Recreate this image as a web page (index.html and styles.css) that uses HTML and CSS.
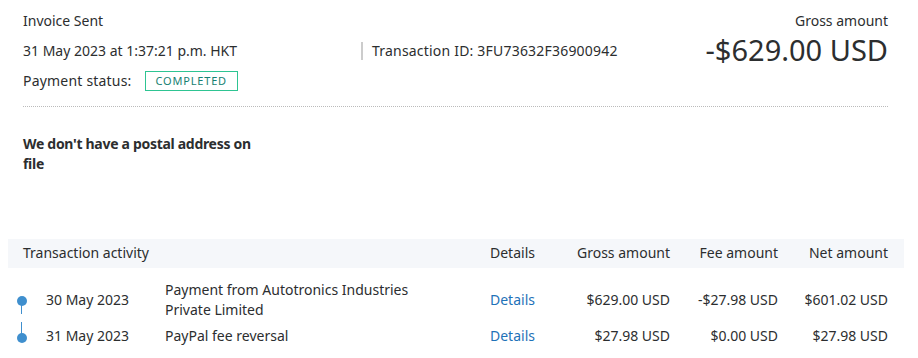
FILE: index.html
```html
<!DOCTYPE html>
<html lang="en">
<head>
  <meta charset="UTF-8" />
  <title>Transaction details</title>
  <link rel="stylesheet" href="styles.css">
</head>
<body>
  <div class="page">
    <div class="summary">
      <div class="summary-left">
        <div class="line">Invoice Sent</div>
        <div class="line">31 May 2023 at 1:37:21 p.m. HKT</div>
        <div class="line status">Payment status: <span class="badge">COMPLETED</span></div>
      </div>
      <div class="summary-mid">
        <div class="txn-id">Transaction ID: 3FU73632F36900942</div>
      </div>
      <div class="summary-right">
        <div class="line">Gross amount</div>
        <div class="big-amount">-$629.00 USD</div>
      </div>
    </div>

    <div class="address">We don't have a postal address on file</div>

    <div class="activity">
      <div class="row head">
        <div class="span2">Transaction activity</div>
        <div>Details</div>
        <div class="num">Gross amount</div>
        <div class="num">Fee amount</div>
        <div class="num">Net amount</div>
      </div>

      <div class="row item first-row">
        <div class="date"><span class="dot first"></span>30 May 2023</div>
        <div class="desc">Payment from Autotronics Industries Private Limited</div>
        <div><a href="#">Details</a></div>
        <div class="num">$629.00 USD</div>
        <div class="num">-$27.98 USD</div>
        <div class="num">$601.02 USD</div>
      </div>

      <div class="row item">
        <div class="date"><span class="dot last"></span>31 May 2023</div>
        <div class="desc">PayPal fee reversal</div>
        <div><a href="#">Details</a></div>
        <div class="num">$27.98 USD</div>
        <div class="num">$0.00 USD</div>
        <div class="num">$27.98 USD</div>
      </div>
    </div>
  </div>
</body>
</html>
```

FILE: styles.css
```css
* { margin: 0; padding: 0; box-sizing: border-box; }
body {
  font-family: "Noto Sans", "Open Sans", sans-serif;
  font-size: 14px;
  line-height: 20px;
  color: #2c2e2f;
  background: #fff;
}
.page { padding: 11px 14px 0 8px; }
.summary {
  display: flex;
  margin: 0 16px 0 15px;
  padding-bottom: 15px;
  border-bottom: 1px dotted #bbb;
}
.summary-left { width: 338px; display: flex; flex-direction: column; gap: 10px; }
.summary-mid { flex: 1; padding-top: 30px; }
.txn-id {
  border-left: 2px solid #ccc;
  padding-left: 9px;
  line-height: 18px;
  margin-top: 1px;
  letter-spacing: 0.2px;
}
.summary-right { text-align: right; }
.big-amount {
  font-size: 29px;
  line-height: 38px;
}
.status { display: flex; align-items: center; gap: 13px; letter-spacing: 0.2px; }
.badge {
  display: inline-block;
  border: 1px solid #2ec492;
  color: #177f72;
  font-size: 11px;
  line-height: 18px;
  letter-spacing: 0.8px;
  padding: 0 10px;
}
.address {
  margin: 27px 0 0 15px;
  width: 240px;
  font-weight: bold;
  letter-spacing: -0.3px;
}
.activity { margin-top: 65px; }
.row {
  display: grid;
  grid-template-columns: 157px 325px 60px 120px 108px 110px;
  padding-right: 16px;
}
.head {
  background: #f5f7fa;
  padding-top: 4px;
  padding-bottom: 5px;
}
.head .span2 { grid-column: span 2; padding-left: 15px; }
.num { text-align: right; }
.item { padding: 3px 16px 3px 0; align-items: center; }
.first-row { padding-top: 12px; }
.desc { max-width: 270px; }
.date { padding-left: 38px; position: relative; }
.item a { color: #1f72b8; text-decoration: none; }
.dot {
  position: absolute;
  left: 9px;
  width: 10px;
  height: 10px;
  border-radius: 50%;
  background: #3f8fce;
}
.dot.first { top: 6px; }
.dot.last { top: 7px; }
.dot::after {
  content: "";
  position: absolute;
  left: 4px;
  width: 1px;
  background: #3f8fce;
}
.dot.first::after { top: 5px; height: 13px; }
.dot.last::after { bottom: 5px; height: 16px; }
```
